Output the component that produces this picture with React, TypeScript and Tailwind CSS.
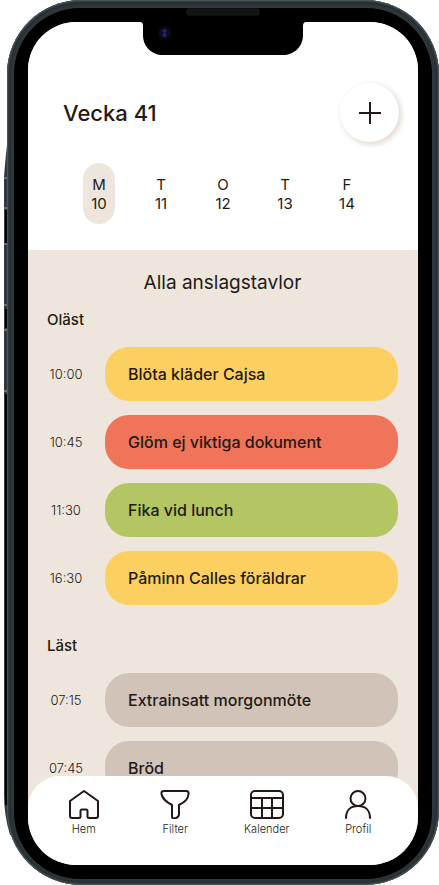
import type { ReactNode } from "react";

type Notice = { time: string; title: string; color: string };

const unread: Notice[] = [
  { time: "10:00", title: "Blöta kläder Cajsa", color: "bg-[#fcd060]" },
  { time: "10:45", title: "Glöm ej viktiga dokument", color: "bg-[#ef745a]" },
  { time: "11:30", title: "Fika vid lunch", color: "bg-[#b4c563]" },
  { time: "16:30", title: "Påminn Calles föräldrar", color: "bg-[#fcd060]" },
];

const read: Notice[] = [
  { time: "07:15", title: "Extrainsatt morgonmöte", color: "bg-[#d1c3b7]" },
  { time: "07:45", title: "Bröd", color: "bg-[#d1c3b7]" },
];

const days = [
  ["M", "10"],
  ["T", "11"],
  ["O", "12"],
  ["T", "13"],
  ["F", "14"],
];

function NoticeSection({ title, items }: { title: string; items: Notice[] }) {
  return (
    <section>
      <h3 className="text-[15px] leading-6 font-medium">{title}</h3>
      <ul className="mt-[15px] flex flex-col gap-3.5">
        {items.map((n) => (
          <li key={n.time} className="flex items-center gap-5">
            <time className="flex w-[38px] justify-center text-[13px] leading-5 font-light whitespace-nowrap">{n.time}</time>
            <button type="button" className={`h-[54px] min-w-0 flex-1 rounded-3xl px-[23px] text-left text-base font-medium ${n.color}`}>
              {n.title}
            </button>
          </li>
        ))}
      </ul>
    </section>
  );
}

function NavItem({ label, children }: { label: string; children: ReactNode }) {
  return (
    <button type="button" className="flex flex-col items-center text-[11px] leading-5">
      <svg viewBox="0 0 34 30" className="h-[30px] w-[34px]" fill="none" stroke="#231815" strokeWidth="2" strokeLinecap="round" strokeLinejoin="round" aria-hidden="true">
        {children}
      </svg>
      {label}
    </button>
  );
}

function Notch() {
  return (
    <svg viewBox="0 0 170 50" className="absolute top-[7px] left-1/2 h-[50px] w-[170px] -translate-x-1/2" aria-hidden="true">
      <path d="M0 2h170v13h-2q-3 0-3 4v9c0 12-9 20-20 20H25C14 48 5 40 5 28v-9q0-4-3-4H0z" fill="#000" />
      <rect x="49" y="2" width="72" height="6" rx="2" fill="#111313" stroke="#1a1c1c" />
      <circle cx="26.500" cy="26" r="7" fill="#08080d" />
      <circle cx="26.500" cy="26" r="5" fill="#0d0d22" />
      <circle cx="26.500" cy="24" r="2" fill="#20246b" />
      <circle cx="26.500" cy="28" r="2" fill="#20246b" />
    </svg>
  );
}

function SideButtons() {
  return (
    <svg viewBox="0 0 10 690" className="absolute top-[145px] left-1 h-[690px] w-2.5" aria-hidden="true">
      <path d="M3 0Q1 18 0 32v618q0 20 6 40h4V0z" fill="#30393d" />
      <path d="M1 65h2v33H1zM1 164h2v19H1zM1 249h2v411H1z" fill="#000" />
      <path d="M0 33h3M0 63h3M0 99h3M0 160h3M0 185h3M0 246h3" stroke="#a3a7a9" />
    </svg>
  );
}

export default function App() {
  return (
    <div className="relative h-screen overflow-hidden bg-white pl-[7px] font-['Inter',sans-serif] text-[#231a15]">
      <SideButtons />
      <div className="relative h-full rounded-[74px] bg-[#30393d] px-[7px] pt-2 pb-1.5 shadow-[inset_0_0_2px_1px_#59646a,inset_0_0_3px_4px_#252d31]">
        <div className="h-full rounded-[66px] bg-black p-3.5">
          <div className="flex h-full flex-col overflow-hidden rounded-[48px] bg-[#eee6dd]">
            <header className="bg-white pt-[61px] pb-[26px]">
              <div className="flex items-center justify-between pr-[19px] pl-[35px]">
                <h1 className="text-[22px] leading-7 font-medium">Vecka 41</h1>
                <button type="button" aria-label="Lägg till" className="flex size-[59px] items-center justify-center rounded-full bg-white shadow-[2px_2px_5px_1px_#e4ddd4]">
                  <svg viewBox="0 0 22 22" className="size-[22px]" stroke="#231815" strokeWidth="2" aria-hidden="true">
                    <path d="M11 0v22M0 11h22" />
                  </svg>
                </button>
              </div>
              <div className="mt-[21px] flex justify-between px-[55px]">
                {days.map(([d, n], i) => (
                  <button key={n} type="button" className={`flex h-[61px] w-8 flex-col items-center justify-center rounded-full text-[15px] leading-[19px] font-normal ${i === 0 ? "bg-[#eee6dd]" : ""}`}>
                    <span>{d}</span>
                    <span>{n}</span>
                  </button>
                ))}
              </div>
            </header>
            <main className="flex min-h-0 flex-1 flex-col overflow-hidden pt-[19px] pr-5 pl-[19px]">
              <h2 className="mb-[11px] text-center text-[19px] leading-7 font-normal">Alla anslagstavlor</h2>
              <div className="flex flex-col gap-[29px]">
                <NoticeSection title="Oläst" items={unread} />
                <NoticeSection title="Läst" items={read} />
              </div>
            </main>
            <nav className="relative z-10 -mt-8 grid h-[89px] shrink-0 grid-cols-4 items-start rounded-t-[32px] bg-white pt-[13px] pr-3.5 pl-2.5 font-light">
              <NavItem label="Hem">
                <path d="M17 2 3 12v15q0 2 2 2h7q1.500 0 1.500-1.500V22q0-1.500 1.500-1.500h4q1.500 0 1.500 1.500v5.500q0 1.500 1.500 1.500h7q2 0 2-2V12z" />
              </NavItem>
              <NavItem label="Filter">
                <path d="M6 2h22q3 0 2.500 3c-.5 5-3 7.500-9.500 11v9c0 2-1 4-5 4.500q-2 0-2-2V16C7.500 12.500 4.500 10 3.500 5Q3 2 6 2z" />
              </NavItem>
              <NavItem label="Kalender">
                <rect x="1" y="2" width="32" height="27" rx="4" />
                <path d="M1 9h32M1 19h32M12 9v20M22 9v20" />
              </NavItem>
              <NavItem label="Profil">
                <circle cx="17" cy="9.500" r="7.500" />
                <path d="M5 29c0-8 5-12 12-12s12 4 12 12" />
              </NavItem>
            </nav>
          </div>
        </div>
        <Notch />
      </div>
    </div>
  );
}
